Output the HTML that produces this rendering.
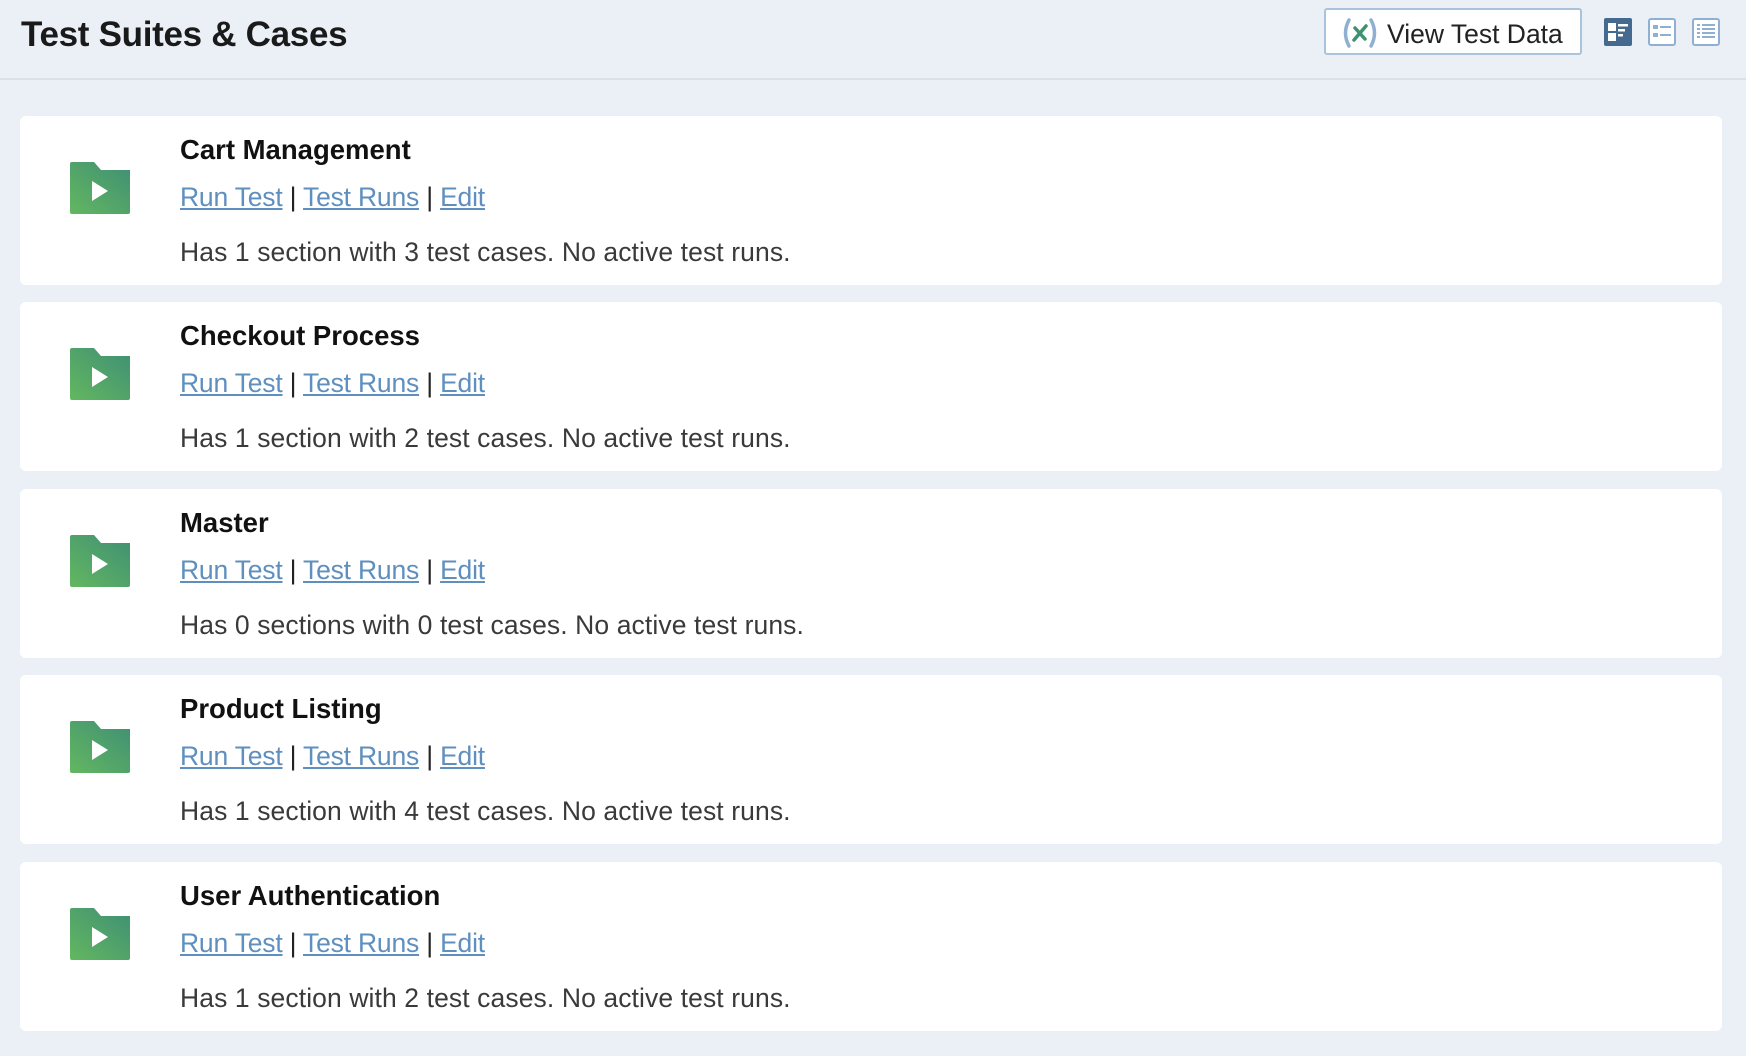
<!DOCTYPE html>
<html><head><style>
body{margin:0;width:1746px;height:1056px;background:#ebf0f7;font-family:"Liberation Sans",sans-serif;overflow:hidden;position:relative}
.hdr{position:absolute;left:0;top:0;width:1746px;height:78px;border-bottom:2px solid #d8e0ea}
.ttl{position:absolute;left:21px;top:15px;font-size:35px;font-weight:bold;color:#1a1a1a;letter-spacing:-0.3px}
.btn{position:absolute;left:1324px;top:8px;width:258px;height:47px;background:#fff;border:2px solid #a9c3db;border-radius:3px;box-sizing:border-box}
.btn span{position:absolute;left:61px;top:9px;font-size:26.5px;color:#222}
.card{position:absolute;left:20px;width:1702px;height:169px;background:#fff;border-radius:6px}
.fold{position:absolute;left:50px;top:46px}
.name{position:absolute;left:160px;top:18px;font-size:27.5px;font-weight:bold;color:#111}
.links{position:absolute;left:160px;top:66px;font-size:26.5px;color:#222;letter-spacing:-0.2px}
.links a{color:#5e8fbf;text-decoration:underline}
.desc{position:absolute;left:160px;top:121px;font-size:26.5px;color:#3a3a3a;letter-spacing:0.1px}
</style></head><body>
<div class="hdr">
<div class="ttl">Test Suites &amp; Cases</div>
<div class="btn">
<svg style="position:absolute;left:15px;top:8px" width="38" height="30" viewBox="0 0 38 30"><path d="M8 2 Q1 15 8 28" stroke="#8fb0d3" stroke-width="3.5" fill="none" stroke-linecap="round"/><path d="M30 2 Q37 15 30 28" stroke="#8fb0d3" stroke-width="3.5" fill="none" stroke-linecap="round"/><path d="M13 22 L25 8 M14 10 L24 21" stroke="#3e9270" stroke-width="3.5" stroke-linecap="round"/></svg>
<span>View Test Data</span></div>
<svg style="position:absolute;left:1604px;top:18px" width="28" height="28" viewBox="0 0 28 28"><rect width="28" height="28" rx="2" fill="#456a8f"/><rect x="4" y="5" width="8" height="8" fill="#fff"/><rect x="4" y="15" width="8" height="8" fill="#fff"/><rect x="14" y="6" width="10" height="2.5" fill="#fff"/><rect x="14" y="11" width="7" height="2.5" fill="#fff"/><rect x="14" y="16" width="5" height="2.5" fill="#fff"/></svg>
<svg style="position:absolute;left:1648px;top:18px" width="28" height="28" viewBox="0 0 28 28"><rect x="1" y="1" width="26" height="26" rx="2" fill="#fff" stroke="#8fb0d3" stroke-width="2"/><rect x="5" y="7" width="5" height="4" fill="#8fb0d3"/><rect x="5" y="15" width="5" height="4" fill="#8fb0d3"/><rect x="12" y="8" width="11" height="2" fill="#8fb0d3"/><rect x="12" y="16" width="11" height="2" fill="#8fb0d3"/></svg>
<svg style="position:absolute;left:1692px;top:18px" width="28" height="28" viewBox="0 0 28 28"><rect x="1" y="1" width="26" height="26" rx="2" fill="#fff" stroke="#8fb0d3" stroke-width="2"/><g fill="#8fb0d3"><rect x="5" y="6" width="3" height="2"/><rect x="10" y="6" width="13" height="2"/><rect x="5" y="10" width="3" height="2"/><rect x="10" y="10" width="13" height="2"/><rect x="5" y="14" width="3" height="2"/><rect x="10" y="14" width="13" height="2"/><rect x="5" y="18" width="3" height="2"/><rect x="10" y="18" width="13" height="2"/></g></svg>
</div>

<svg width="0" height="0" style="position:absolute"><defs><linearGradient id="g" x1="0" y1="1" x2="1" y2="0"><stop offset="0" stop-color="#63b760"/><stop offset="1" stop-color="#3f8f74"/></linearGradient></defs></svg>

<div class="card" style="top:116px"><svg class="fold" width="60" height="52" viewBox="0 0 60 52"><path d="M2 0 H24 L31 8 H60 V50 Q60 52 58 52 H2 Q0 52 0 50 V2 Q0 0 2 0Z" fill="url(#g)"/><path d="M22 19 L38 29 L22 39Z" fill="#fff"/></svg><div class="name">Cart Management</div><div class="links"><a>Run Test</a> | <a>Test Runs</a> | <a>Edit</a></div><div class="desc">Has 1 section with 3 test cases. No active test runs.</div></div>

<div class="card" style="top:302px"><svg class="fold" width="60" height="52" viewBox="0 0 60 52"><path d="M2 0 H24 L31 8 H60 V50 Q60 52 58 52 H2 Q0 52 0 50 V2 Q0 0 2 0Z" fill="url(#g)"/><path d="M22 19 L38 29 L22 39Z" fill="#fff"/></svg><div class="name">Checkout Process</div><div class="links"><a>Run Test</a> | <a>Test Runs</a> | <a>Edit</a></div><div class="desc">Has 1 section with 2 test cases. No active test runs.</div></div>

<div class="card" style="top:489px"><svg class="fold" width="60" height="52" viewBox="0 0 60 52"><path d="M2 0 H24 L31 8 H60 V50 Q60 52 58 52 H2 Q0 52 0 50 V2 Q0 0 2 0Z" fill="url(#g)"/><path d="M22 19 L38 29 L22 39Z" fill="#fff"/></svg><div class="name">Master</div><div class="links"><a>Run Test</a> | <a>Test Runs</a> | <a>Edit</a></div><div class="desc">Has 0 sections with 0 test cases. No active test runs.</div></div>

<div class="card" style="top:675px"><svg class="fold" width="60" height="52" viewBox="0 0 60 52"><path d="M2 0 H24 L31 8 H60 V50 Q60 52 58 52 H2 Q0 52 0 50 V2 Q0 0 2 0Z" fill="url(#g)"/><path d="M22 19 L38 29 L22 39Z" fill="#fff"/></svg><div class="name">Product Listing</div><div class="links"><a>Run Test</a> | <a>Test Runs</a> | <a>Edit</a></div><div class="desc">Has 1 section with 4 test cases. No active test runs.</div></div>

<div class="card" style="top:862px"><svg class="fold" width="60" height="52" viewBox="0 0 60 52"><path d="M2 0 H24 L31 8 H60 V50 Q60 52 58 52 H2 Q0 52 0 50 V2 Q0 0 2 0Z" fill="url(#g)"/><path d="M22 19 L38 29 L22 39Z" fill="#fff"/></svg><div class="name">User Authentication</div><div class="links"><a>Run Test</a> | <a>Test Runs</a> | <a>Edit</a></div><div class="desc">Has 1 section with 2 test cases. No active test runs.</div></div>
</body></html>
